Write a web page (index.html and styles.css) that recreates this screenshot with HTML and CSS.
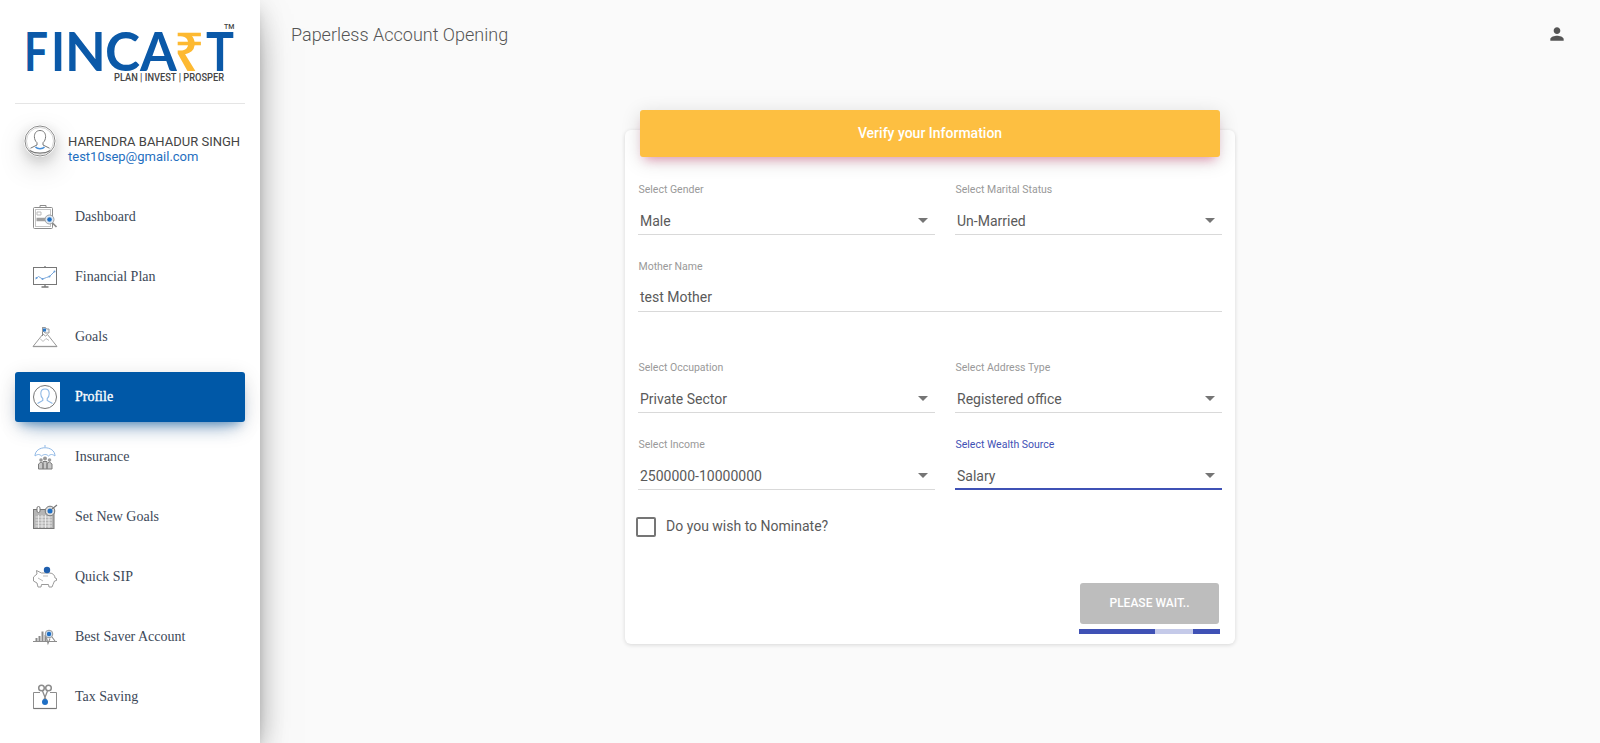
FILE: index.html
```html
<!DOCTYPE html>
<html lang="en">
  <head>
    <meta charset="UTF-8" />
    <meta name="viewport" content="width=device-width, initial-scale=1.0" />
    <title>Paperless Account Opening</title>
    <link rel="stylesheet" href="styles.css">
  </head>
  <body>
    <aside class="sidebar">
      <div class="logo">
        <div class="logo-word">
          <span class="l-f">F</span><span class="l-i">I</span><span class="l-n">N</span><span class="l-c">C</span><span class="l-a">A</span><span class="l-r">₹</span><span class="l-t">T</span>
          <span class="logo-tm">TM</span>
        </div>
        <div class="logo-tag">PLAN | INVEST | PROSPER</div>
      </div>

      <div class="user">
        <div class="avatar">
          <svg viewBox="0 0 32 32" width="32" height="32">
            <circle cx="16" cy="16" r="15" fill="#fff" stroke="#8a8a8a" stroke-width="1"/>
            <circle cx="16" cy="16" r="13.500" fill="none" stroke="#ccc" stroke-width=".8"/>
            <path d="M16 5.500c-3.800 0-5.600 2.800-5.600 6.100 0 2.500 1 4.700 2.600 6.100v2.300l-6.500 3.200" fill="none" stroke="#777" stroke-width="1"/>
            <path d="M16 5.500c3.800 0 5.600 2.800 5.600 6.100 0 2.500-1 4.700-2.600 6.100v2.300l6.500 3.200" fill="none" stroke="#777" stroke-width="1"/>
            <path d="M11.500 22c2 2.200 7 2.200 9 0" fill="none" stroke="#4a90d9" stroke-width="1.500"/>
            <path d="M5.500 25.500c6 3.500 15 3.500 21 0" fill="none" stroke="#777" stroke-width="1.200"/>
          </svg>
        </div>
        <div class="user-text">
          <div class="user-name">HARENDRA BAHADUR SINGH</div>
          <div class="user-email">test10sep@gmail.com</div>
        </div>
      </div>

      <nav class="nav">
        <a class="nav-item">
          <span class="nav-icon">
            <svg viewBox="0 0 30 30" width="30" height="30" fill="none" stroke="#8c8c8c">
              <rect x="3.500" y="5.500" width="19" height="21" rx="1"/>
              <rect x="5.500" y="7.500" width="15" height="17" stroke="#c4c4c4"/>
              <path d="M10 5.500V3.500h6v2"/>
              <path d="M7 10h4v3H7z" stroke="#bbb"/>
              <path d="M6.500 17.500h10" stroke="#a0a0a0" stroke-width="3.500"/>
              <circle cx="19.500" cy="17.500" r="4.500" stroke="#a0a0a0" fill="#dfe9f4"/>
              <circle cx="19.500" cy="17.500" r="2.300" fill="#1f6fc4" stroke="none"/>
              <path d="M22.500 21l4 4" stroke-width="1.700"/>
            </svg>
          </span>
          <span>Dashboard</span>
        </a>
        <a class="nav-item">
          <span class="nav-icon">
            <svg viewBox="0 0 30 30" width="30" height="30" fill="none" stroke="#777">
              <rect x="3.500" y="5.500" width="23" height="17"/>
              <path d="M15 4v1.500M15 22.500v2M11.500 25h7" stroke-width="1.300"/>
              <path d="M5.500 17l3-2.500 4 2.500 4-1.500 3-1 5-5" stroke="#7aa8dc" stroke-width="1"/>
              <circle cx="6.500" cy="16" r="1" fill="#6a9fd8" stroke="none"/>
              <circle cx="12.500" cy="17" r="1" fill="#6a9fd8" stroke="none"/>
              <circle cx="19.500" cy="14.500" r="1" fill="#6a9fd8" stroke="none"/>
              <circle cx="24.500" cy="9.500" r="1" fill="#6a9fd8" stroke="none"/>
            </svg>
          </span>
          <span>Financial Plan</span>
        </a>
        <a class="nav-item">
          <span class="nav-icon">
            <svg viewBox="0 0 30 30" width="30" height="30" fill="none" stroke="#999">
              <path d="M3 24.500L13 12l2.500 2 2-1.500 9.500 12"/>
              <path d="M3 24.500h24" stroke-width="1.300"/>
              <path d="M10 16.500l3 3 3-3 3 2" stroke="#bbb"/>
              <path d="M12.500 14V5" stroke="#888"/>
              <path d="M12.500 5.500h3l1 1.500h2.500v4h-4l-1-1.500h-1.500z" fill="#eef3f9"/>
              <rect x="13" y="6.500" width="3" height="3" fill="#2a78c8" stroke="none"/>
            </svg>
          </span>
          <span>Goals</span>
        </a>
        <a class="nav-item active">
          <span class="nav-icon">
            <svg viewBox="0 0 30 30" width="30" height="30" fill="none">
              <circle cx="15" cy="15" r="11.500" stroke="#777"/>
              <path d="M15 7c-2.800 0-4.200 2.200-4.200 4.700 0 2 .8 3.800 2 4.900v1.900l-5.300 3M15 7c2.800 0 4.200 2.200 4.200 4.700 0 2-.8 3.800-2 4.900v1.900l5.300 3" stroke="#8db7e4" stroke-width="1.100"/>
            </svg>
          </span>
          <span>Profile</span>
        </a>
        <a class="nav-item">
          <span class="nav-icon">
            <svg viewBox="0 0 30 30" width="30" height="30" fill="none" stroke="#8c8c8c">
              <path d="M5 14c0-11 20-11 20 0-2.500-2-4.500-2-6.500 0-2-2-4.500-2-7 0-2-2-4-2-6.500 0z" stroke="#8fb8e6"/>
              <path d="M15 5V3" stroke="#8fb8e6"/>
              <circle cx="11" cy="18" r="1.800" fill="#999" stroke="none"/>
              <circle cx="15" cy="16.500" r="2" fill="#999" stroke="none"/>
              <circle cx="19.500" cy="18" r="1.800" fill="#999" stroke="none"/>
              <path d="M8.500 27v-5l2.500-2 2 1.500v5.500zM13 27v-7.500h4V27zM17 27v-5.500l2.500-1.500 2.500 2v5z" fill="#c8c8c8" stroke="#7d7d7d"/>
            </svg>
          </span>
          <span>Insurance</span>
        </a>
        <a class="nav-item">
          <span class="nav-icon">
            <svg viewBox="0 0 30 30" width="30" height="30" fill="none" stroke="#777">
              <rect x="3.500" y="7.500" width="20.500" height="19" fill="#b5b5b5"/>
              <path d="M5.500 15h16.500M5.500 18h16.500M5.500 21h16.500M5.500 24h16.500M8.500 13v13M12 13v13M15.500 13v13M19 13v13" stroke="#f2f2f2" stroke-width=".8"/>
              <rect x="7" y="4.500" width="3" height="6" rx="1.500" fill="#fff"/>
              <circle cx="20" cy="9" r="4.800" fill="#ddd"/>
              <circle cx="20" cy="9" r="2.500" fill="#1f6fc4" stroke="none"/>
              <path d="M22 7l5-4" stroke-width="1.300"/>
            </svg>
          </span>
          <span>Set New Goals</span>
        </a>
        <a class="nav-item">
          <span class="nav-icon">
            <svg viewBox="0 0 30 30" width="30" height="30" fill="none" stroke="#9a9a9a">
              <path d="M3.500 15l3.500-3-.500-3.500 5 2.500h8c3.500 0 5.500 2.500 5.500 5l1.500.500v2l-2 .500-1.500 3.500-1 2.500h-3l-.500-2.500h-7L11 25H8l-1-4-3.500-2z"/>
              <path d="M8 16l5 3M13 14h5" stroke="#bbb"/>
              <circle cx="17" cy="8" r="3.200" fill="#1f5fae" stroke="none"/>
            </svg>
          </span>
          <span>Quick SIP</span>
        </a>
        <a class="nav-item">
          <span class="nav-icon">
            <svg viewBox="0 0 30 30" width="30" height="30" fill="none" stroke="#8c8c8c">
              <path d="M3 19.500h24"/>
              <path d="M6.500 19v-3M9.500 19v-5M12.500 19V9.500M15.500 19v-6" stroke-width="2"/>
              <circle cx="19" cy="12" r="3.800" fill="#cfe0f2" stroke="#999"/>
              <circle cx="19" cy="12" r="2.200" fill="#1f6fc4" stroke="none"/>
              <path d="M22 15l3 4M16.500 15.500l1.500 6 2-5" stroke-width="1.100"/>
            </svg>
          </span>
          <span>Best Saver Account</span>
        </a>
        <a class="nav-item">
          <span class="nav-icon">
            <svg viewBox="0 0 30 30" width="30" height="30" fill="none" stroke="#8c8c8c">
              <circle cx="11.500" cy="6" r="2.800" stroke-width="1.500"/>
              <circle cx="18.500" cy="6" r="2.800" stroke-width="1.500"/>
              <path d="M12.500 9l4 10M17.500 9l-4 10" stroke-width="1.300"/>
              <path d="M10 10.500H3.500v16h23v-16H20"/>
              <path d="M3.500 26.500h23" stroke-width="1.200" stroke="#777"/>
              <circle cx="15" cy="20" r="3" fill="#1f6fc4" stroke="none"/>
            </svg>
          </span>
          <span>Tax Saving</span>
        </a>
      </nav>
    </aside>

    <main class="main">
      <header class="topbar">
        <div class="page-title">Paperless Account Opening</div>
        <svg class="user-icon" viewBox="0 0 24 24" width="20" height="20">
          <path d="M12 12c2.210 0 4-1.790 4-4s-1.790-4-4-4-4 1.790-4 4 1.790 4 4 4zm0 2c-2.670 0-8 1.340-8 4v2h16v-2c0-2.660-5.330-4-8-4z"/>
        </svg>
      </header>

      <section class="card">
        <div class="card-header">Verify your Information</div>
        <form class="card-form">
          <div class="form-row">
            <div class="field">
              <div class="field-label">Select Gender</div>
              <div class="field-value select">Male</div>
            </div>
            <div class="field">
              <div class="field-label">Select Marital Status</div>
              <div class="field-value select">Un-Married</div>
            </div>
          </div>
          <div class="form-row row-spaced">
            <div class="field field-wide">
              <div class="field-label">Mother Name</div>
              <div class="field-value text-value">test Mother</div>
            </div>
          </div>
          <div class="form-row">
            <div class="field">
              <div class="field-label">Select Occupation</div>
              <div class="field-value select">Private Sector</div>
            </div>
            <div class="field">
              <div class="field-label">Select Address Type</div>
              <div class="field-value select">Registered office</div>
            </div>
          </div>
          <div class="form-row">
            <div class="field">
              <div class="field-label">Select Income</div>
              <div class="field-value select">2500000-10000000</div>
            </div>
            <div class="field focused">
              <div class="field-label">Select Wealth Source</div>
              <div class="field-value select">Salary</div>
            </div>
          </div>
          <div class="nominate">
            <span class="checkbox"></span>
            <span class="nominate-text">Do you wish to Nominate?</span>
          </div>
          <div class="actions">
            <button type="button" class="wait-btn" disabled>PLEASE WAIT..</button>
            <div class="progress"><div class="progress-gap"></div></div>
          </div>
        </form>
      </section>
    </main>
  </body>
</html>
```

FILE: styles.css
```css
* {
  box-sizing: border-box;
}
html,
body {
  margin: 0;
  height: 743px;
  overflow: hidden;
}
body {
  display: flex;
  background-color: #fafafa;
  font-family: Roboto, "Liberation Sans", sans-serif;
  color: #555;
}

/* sidebar */
.sidebar {
  flex: 0 0 260px;
  height: 743px;
  background-color: #fff;
  box-shadow: 0 16px 38px -12px rgba(0, 0, 0, 0.56),
    0 4px 25px 0 rgba(0, 0, 0, 0.12), 0 8px 10px -5px rgba(0, 0, 0, 0.2);
  z-index: 2;
}
.logo {
  height: 104px;
  margin: 0 15px;
  padding: 32px 0 0 9px;
  border-bottom: 1px solid #e5e5e5;
}
.logo-word {
  position: relative;
  display: flex;
  height: 38px;
  font-family: Lato, "Liberation Sans", sans-serif;
  font-size: 53px;
  font-weight: 700;
  line-height: 38px;
  color: #0b59a8;
}
.logo-word span {
  display: block;
}
.l-f {
  width: 27px;
  transform: scaleX(0.8);
  transform-origin: left;
}
.l-i {
  width: 14px;
  transform: scaleX(0.9);
  transform-origin: left;
}
.l-n {
  width: 40px;
}
.l-c {
  width: 35px;
}
.l-a {
  width: 34px;
}
.l-r {
  width: 32px;
  font-family: "Noto Sans", "DejaVu Sans", sans-serif;
  font-weight: 600;
  color: #fdb931;
}
.l-t {
  width: 25px;
  transform: scaleX(0.88);
  transform-origin: left;
}
.logo-word .logo-tm {
  position: absolute;
  left: 200px;
  top: -9px;
  font-family: Roboto, sans-serif;
  font-size: 7px;
  font-weight: 500;
  line-height: 9px;
  color: #444;
}
.logo-tag {
  margin: 2px 0 0 90px;
  font-size: 10px;
  font-weight: 500;
  line-height: 12px;
  color: #444;
  white-space: nowrap;
  transform: scaleX(0.93);
  transform-origin: left;
}
.user {
  display: flex;
  align-items: flex-start;
  height: 88px;
  padding: 21px 0 0 24px;
}
.avatar {
  width: 32px;
  height: 32px;
  margin-right: 12px;
  border-radius: 50%;
  box-shadow: 0 10px 30px -6px rgba(0, 0, 0, 0.42),
    0 4px 12px rgba(0, 0, 0, 0.14);
}
.user-text {
  padding-top: 9px;
}
.user-name {
  font-size: 13px;
  line-height: 15px;
  color: #444;
  white-space: nowrap;
}
.user-email {
  font-size: 13px;
  line-height: 15px;
  color: #1f6fbf;
}
.nav {
  display: flex;
  flex-direction: column;
  gap: 10px;
  padding: 0 15px;
}
.nav-item {
  display: flex;
  align-items: center;
  height: 50px;
  padding-left: 15px;
  border-radius: 3px;
  font-family: "Liberation Serif", serif;
  font-size: 14px;
  color: #3c4858;
}
.nav-icon {
  display: block;
  width: 30px;
  height: 30px;
  margin-right: 15px;
}
.nav-icon svg {
  display: block;
}
.nav-item.active {
  background-color: #0058a7;
  color: #fff;
  -webkit-text-stroke: 0.3px #fff;
  box-shadow: 0 12px 20px -10px rgba(0, 88, 167, 0.5),
    0 4px 20px 0 rgba(0, 0, 0, 0.12), 0 7px 8px -5px rgba(0, 88, 167, 0.35);
}
.nav-item.active .nav-icon {
  background-color: #fff;
}

/* main */
.main {
  flex: 1;
  min-width: 0;
}
.topbar {
  display: flex;
  align-items: center;
  justify-content: space-between;
  height: 68px;
  padding: 0 33px 0 31px;
}
.page-title {
  font-size: 18px;
  font-weight: 300;
  color: #555;
}
.user-icon {
  display: block;
  fill: #555;
}
.card {
  width: 610px;
  margin: 62px auto 0;
  background-color: #fff;
  border-radius: 6px;
  box-shadow: 0 1px 4px 0 rgba(0, 0, 0, 0.14);
}
.card-header {
  position: relative;
  top: -20px;
  height: 47px;
  margin: 0 15px -20px;
  border-radius: 3px;
  background-color: #fdbf41;
  color: #fff;
  font-size: 14px;
  font-weight: 500;
  line-height: 47px;
  text-align: center;
  box-shadow: 0 4px 20px 0 rgba(0, 0, 0, 0.14),
    0 7px 10px -5px rgba(233, 30, 99, 0.4);
}
.card-form {
  padding: 25px 13px 10px;
}
.form-row {
  display: grid;
  grid-template-columns: 297px 267px;
  column-gap: 20px;
  margin-bottom: 24px;
}
.row-spaced {
  margin-bottom: 48px;
}
.field-wide {
  grid-column: 1 / span 2;
}
.field-label {
  height: 15px;
  padding-left: 0.5px;
  font-size: 10.5px;
  line-height: 16px;
  color: #999;
}
.field-value {
  position: relative;
  height: 38px;
  padding: 16px 0 0 2px;
  border-bottom: 1px solid #d9d9d9;
  font-size: 14px;
  line-height: 16px;
  color: #5a5a5a;
}
.text-value {
  padding-top: 15px;
}
.select::after {
  content: "";
  position: absolute;
  right: 7px;
  top: 21px;
  border-top: 5px solid #757575;
  border-left: 5px solid transparent;
  border-right: 5px solid transparent;
}
.focused .field-label {
  color: #3f51b5;
}
.focused .field-value {
  border-bottom: 2px solid #3f51b5;
}
.nominate {
  display: flex;
  align-items: center;
  height: 20px;
  margin: 27px 0 46px -2px;
  font-size: 14px;
  color: #5a5a5a;
}
.nominate-text {
  padding-bottom: 2px;
}
.checkbox {
  width: 20px;
  height: 20px;
  margin-right: 10px;
  border: 2px solid #757575;
  border-radius: 2px;
}
.actions {
  width: 141px;
  margin-left: auto;
  margin-right: 2px;
}
.wait-btn {
  display: block;
  width: 139px;
  height: 41px;
  margin: 0 1px 5px;
  padding: 0 0 2px;
  border: none;
  border-radius: 3px;
  background-color: #bdbdbd;
  color: #fff;
  font-family: inherit;
  font-size: 12px;
  font-weight: 500;
}
.progress {
  height: 5px;
  background-color: #3f51b5;
}
.progress-gap {
  width: 38px;
  height: 5px;
  margin-left: 76px;
  background-color: #c5cae9;
}
```
